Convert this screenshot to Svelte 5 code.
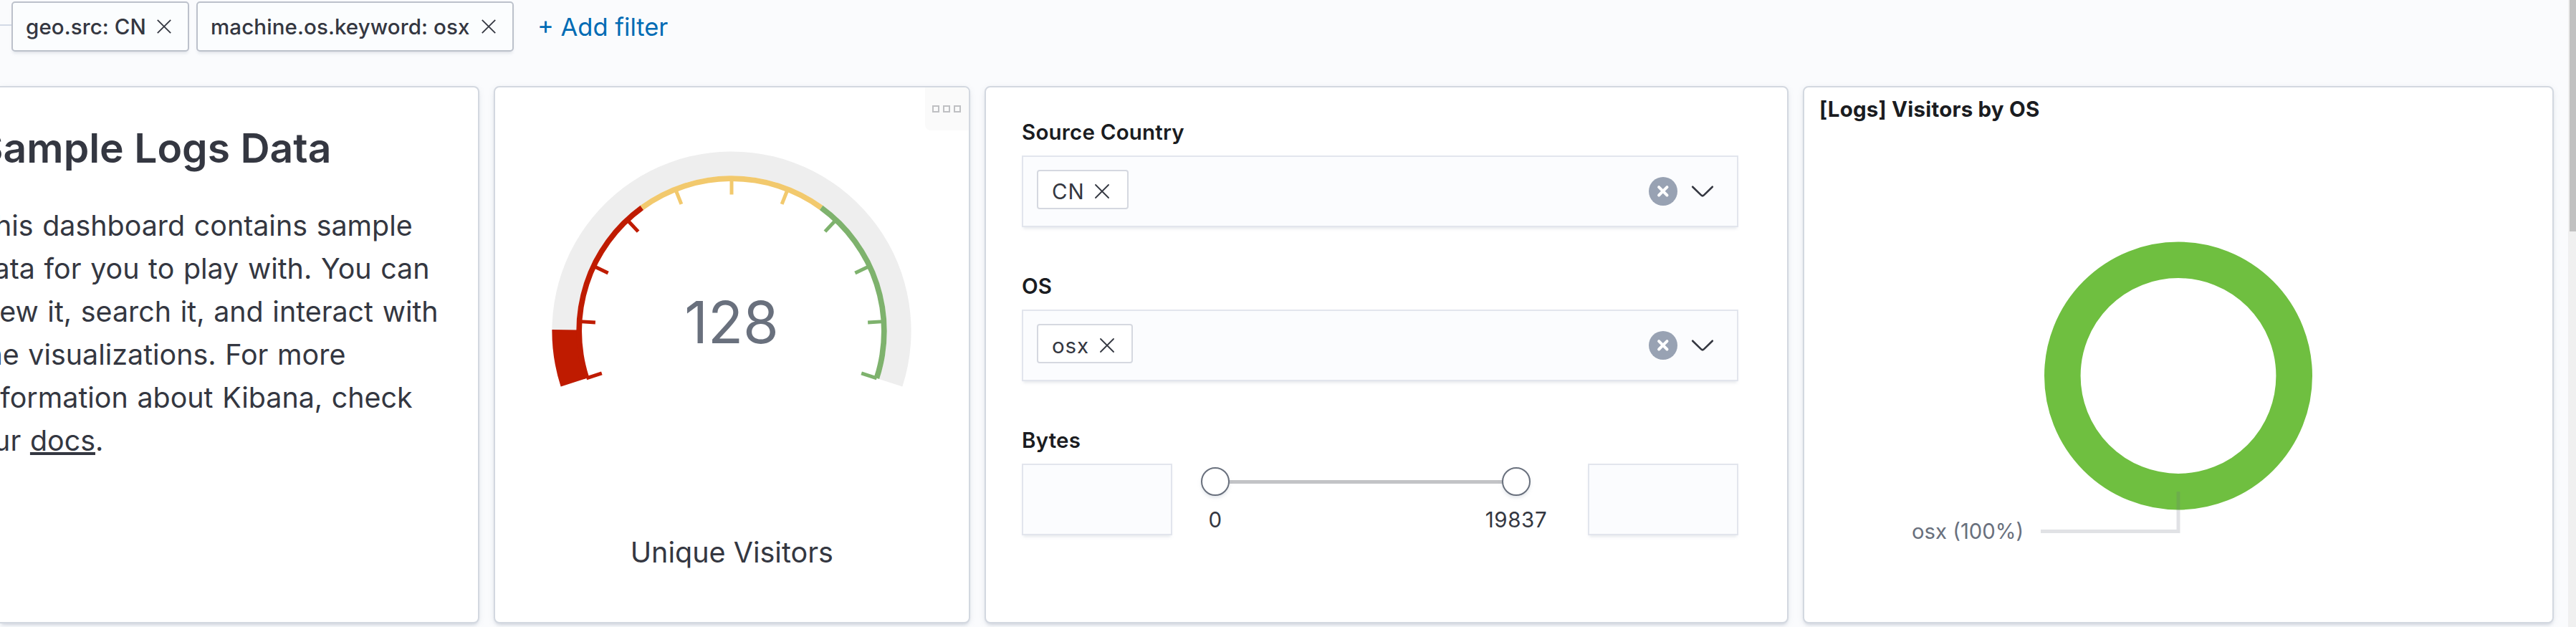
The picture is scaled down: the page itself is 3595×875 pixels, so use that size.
<script>
  const filters = [
    { label: 'geo.src: CN', width: 248 },
    { label: 'machine.os.keyword: osx', width: 443 },
  ];
  const selects = [
    { label: 'Source Country', value: 'CN', width: 128 },
    { label: 'OS', value: 'osx', width: 134.5 },
  ];

  // Gauge geometry: 216 degree sweep, starting 18 degrees below the horizontal.
  const cx = 1021;
  const cy = 462;
  const point = (r, deg) => {
    const a = ((180 + 18 - deg) * Math.PI) / 180;
    return [cx + r * Math.cos(a), cy - r * Math.sin(a)];
  };
  const band = (r0, r1, from, to) => {
    const large = to - from > 180 ? 1 : 0;
    const [a, b, c, d] = [point(r1, from), point(r1, to), point(r0, to), point(r0, from)];
    return `M${a} A${r1} ${r1} 0 ${large} 1 ${b} L${c} A${r0} ${r0} 0 ${large} 0 ${d}Z`;
  };
  const red = '#bf1b00';
  const yellow = '#f2c96d';
  const green = '#7eb26d';
  const value = 128;
  const max = 1500;
  const ticks = Array.from({ length: 11 }, (_, i) => {
    const [x1, y1] = point(190.5, i * 21.6);
    const [x2, y2] = point(213, i * 21.6);
    return { x1, y1, x2, y2, color: i < 4 ? red : i < 7 ? yellow : green };
  });
</script>

<div class="page">
  <div class="main">
    <header class="filters">
      <span class="rule"></span>
      {#each filters as f}
        <div class="pill" style="width: {f.width}px">
          <span>{f.label}</span>
          <svg width="20" height="20" viewBox="0 0 20 20"><path d="M.8 .8 19.2 19.2M19.2 .8 .8 19.2" stroke="#343741" stroke-width="1.8" fill="none" /></svg>
        </div>
      {/each}
      <span class="add">+ Add filter</span>
    </header>

    <div class="panels">
      <section class="panel notes">
        <h1>Sample Logs Data</h1>
        <p>
          This dashboard contains sample<br />data for you to play with. You can<br />view it, search it, and interact with<br />the
          visualizations. For more<br />information about Kibana, check<br />our <u>docs</u>.
        </p>
      </section>

      <section class="panel gauge">
        <svg width="661" height="746" viewBox="691 122 661 746">
          <path d={band(216.5, 250.6, 0, 216)} fill="#eeeeee" />
          <path d={band(214, 250.6, 0, (value / max) * 216)} fill={red} />
          <path d={band(209, 216.7, 0, 72)} fill={red} />
          <path d={band(209, 216.7, 72, 144)} fill={yellow} />
          <path d={band(209, 216.7, 144, 216)} fill={green} />
          {#each ticks as t}
            <line x1={t.x1} y1={t.y1} x2={t.x2} y2={t.y2} stroke={t.color} stroke-width="5" />
          {/each}
          <text class="number" x="1021" y="479">{value}</text>
          <text class="caption" x="1021.3" y="785">Unique Visitors</text>
        </svg>
        <div class="menu"><i></i><i></i><i></i></div>
      </section>

      <section class="panel controls">
        {#each selects as s}
          <div class="field">
            <div class="label">{s.label}</div>
            <div class="combo">
              <div class="chip" style="width: {s.width}px">
                <span>{s.value}</span>
                <svg width="20" height="20" viewBox="0 0 20 20"><path d="M1 1 19 19M19 1 1 19" stroke="#343741" stroke-width="1.8" fill="none" stroke-linecap="round" /></svg>
              </div>
              <svg class="clear" width="40" height="40" viewBox="0 0 40 40">
                <circle cx="20" cy="20" r="20" fill="#98a2b3" />
                <path d="M14.1 14.1 25.5 25.5M25.5 14.1 14.1 25.5" stroke="#fff" stroke-width="4" stroke-linecap="round" />
              </svg>
              <svg width="32" height="32" viewBox="0 0 32 32">
                <path d="M2.2 9.7 14.4 21.6Q16 23 17.6 21.6L29.8 9.7" fill="none" stroke="#343741" stroke-width="2.6" stroke-linecap="round" />
              </svg>
            </div>
          </div>
        {/each}
        <div class="field">
          <div class="label">Bytes</div>
          <div class="range">
            <div class="input"></div>
            <svg width="580" height="100" viewBox="1636 647 580 100">
              <rect x="1696" y="670" width="420" height="5" fill="#c2c3c6" />
              {#each [[1696, '0'], [2116, '19837']] as [x, n]}
                <circle class="thumb" cx={x} cy="672" r="19" />
                <text class="tick" {x} y="736">{n}</text>
              {/each}
            </svg>
            <div class="input"></div>
          </div>
        </div>
      </section>

      <section class="panel pie">
        <h2>[Logs] Visitors by OS</h2>
        <svg width="1044" height="686" viewBox="2518 182 1044 686">
          <circle cx="3040" cy="524.5" r="161.7" fill="none" stroke="#6fbf40" stroke-width="50.6" />
          <path d="M3040 686V741.5H2848" fill="none" stroke="#69707d" stroke-opacity=".2" stroke-width="5" />
          <text class="slice" x="2668" y="751.5">osx (100%)</text>
        </svg>
      </section>
    </div>
  </div>
  <div class="scrollbar"><div class="scroll-thumb"></div></div>
</div>

<style>
  :global(body) { margin: 0; overflow: hidden; }
  .page {
    display: flex;
    width: 3595px;
    height: 875px;
    overflow: hidden;
    background: #fafbfd;
    color: #343741;
    font-family: Inter, sans-serif;
    font-size: 29.5px;
    font-weight: 400;
    letter-spacing: 0.2px;
  }
  svg { display: block; flex: none; }
  .main { width: 3584px; }
  .filters { display: flex; align-items: center; height: 70px; padding: 2px 0 48px; }
  .rule { width: 16px; height: 2px; background: #d3dae6; position: relative; top: -2px; }
  .pill {
    box-sizing: border-box;
    display: flex;
    align-items: center;
    justify-content: space-between;
    height: 70px;
    padding: 0 23px 0 18px;
    margin-right: 10px;
    border: 2px solid #bcc1cb;
    border-radius: 5px;
    background: #fbfdfe;
    box-shadow: 0 4px 4px -2px rgba(152, 162, 179, 0.3);
    font-weight: 500;
    letter-spacing: 0.1px;
    white-space: nowrap;
  }
  .add { margin-left: 23px; font-size: 34.5px; letter-spacing: 0; color: #006bb4; }

  .panels { display: grid; grid-template-columns: 669px 665px 1122px 1048px; column-gap: 20px; height: 750px; }
  .panel {
    box-sizing: border-box;
    overflow: hidden;
    border: 2px solid #d3d8e0;
    border-radius: 8px;
    background: #fff;
    box-shadow: 0 4px 4px -2px rgba(152, 162, 179, 0.3), 0 2px 10px -2px rgba(152, 162, 179, 0.3);
  }

  .notes { padding-top: 50px; border-left: 0; border-radius: 0 8px 8px 0; white-space: nowrap; }
  h1 { margin: 0 0 43px -32.5px; font-size: 57px; line-height: 70px; font-weight: 600; letter-spacing: 0; }
  p { margin: 0 0 0 -32.5px; font-size: 39.4px; line-height: 60px; letter-spacing: 0; word-spacing: 1.6px; }
  u { text-decoration-thickness: 4px; text-underline-offset: 2px; text-decoration-skip-ink: none; }

  .gauge { position: relative; }
  .number { font-size: 80.5px; font-weight: 400; letter-spacing: 0; fill: #69707d; text-anchor: middle; }
  .caption { font-size: 39.5px; letter-spacing: 0; fill: #343741; text-anchor: middle; }
  .menu {
    position: absolute;
    top: 0;
    right: 0;
    display: flex;
    gap: 5px;
    width: 51px;
    height: 35px;
    padding: 25px 0 0 10px;
    border-radius: 0 0 0 8px;
    background: #fafafa;
  }
  .menu i { box-sizing: border-box; width: 10px; height: 10px; border: 2px solid #bfc0c3; }

  .controls { padding: 42px 68px 0 50px; }
  .field { height: 215px; }
  .label { margin-bottom: 13px; line-height: 40px; font-weight: 600; color: #1a1c21; }
  .combo, .input {
    box-sizing: border-box;
    height: 100px;
    border: 2px solid #e2e5ed;
    background: #fbfcfe;
    box-shadow: 0 4px 4px -2px rgba(152, 162, 179, 0.25);
  }
  .combo { display: flex; align-items: center; padding-right: 32px; }
  .chip {
    box-sizing: border-box;
    display: flex;
    align-items: center;
    align-self: flex-start;
    justify-content: space-between;
    height: 55px;
    margin: 18px auto 0 18.5px;
    padding: 5px 24.5px 0 19.5px;
    border: 2px solid #d5d8e0;
    border-radius: 4px;
    background: #fff;
    font-weight: 400;
    letter-spacing: 0.9px;
  }
  .clear { margin-right: 19px; }
  .range { display: flex; }
  .input { width: 210px; }
  .thumb { fill: #fff; stroke: #69707d; stroke-width: 2; filter: drop-shadow(0 3px 2px rgba(152, 162, 179, 0.25)); }
  .tick { fill: #343741; text-anchor: middle; letter-spacing: 0.6px; }

  h2 { margin: 0; height: 50px; padding: 10px 0 0 21px; line-height: 40px; font-size: 29.5px; font-weight: 700; color: #1a1c21; }
  .slice { fill: #69707d; font-size: 29.3px; letter-spacing: 0; }

  .scrollbar { width: 11px; background: #f0f0f0; }
  .scroll-thumb { height: 323px; margin-left: 2px; background: #c1c1c1; }
</style>
